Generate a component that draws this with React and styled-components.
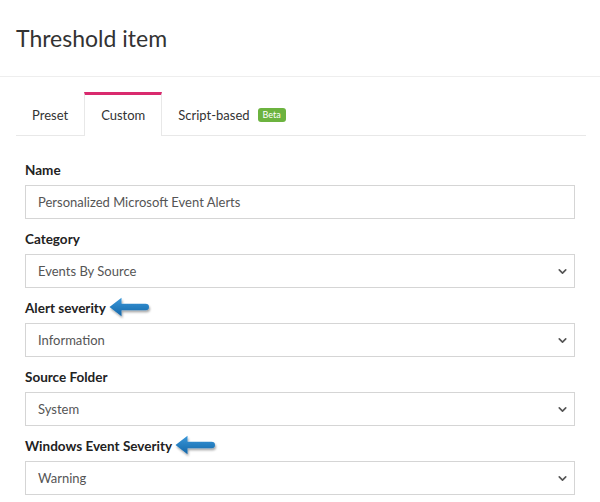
import React from 'react'
import styled, { createGlobalStyle } from 'styled-components'
import { ChevronDown } from 'lucide-react'

const GlobalStyle = createGlobalStyle`
  body {
    margin: 0;
    background: #fff;
    font-family: Lato, "Noto Sans", "Liberation Sans", sans-serif;
    color: #333;
  }
`;

const Page = styled.div`
  width: 600px;
  height: 502px;
  overflow: hidden;
  background: #fff;
`;

const Header = styled.div`
  height: 77px;
  display: flex;
  align-items: center;
  padding: 0 16px;
  border-bottom: 1px solid #eeeeee;
  box-sizing: border-box;
`;

const Title = styled.h1`
  margin: 0;
  font-size: 23px;
  font-weight: 400;
  color: #333;
`;

const Tabs = styled.div`
  display: flex;
  margin: 15px 14px 0 16px;
  border-bottom: 1px solid #e8e8e8;
`;

const Tab = styled.div`
  height: 43px;
  box-sizing: border-box;
  display: flex;
  align-items: center;
  gap: 8px;
  padding: 0 ${p => p.$pad || 15}px;
  font-size: 13px;
  color: #333;
  border-top: 3px solid ${p => (p.$active ? '#d92a6e' : 'transparent')};
  border-left: 1px solid ${p => (p.$active ? '#e8e8e8' : 'transparent')};
  border-right: 1px solid ${p => (p.$active ? '#e8e8e8' : 'transparent')};
  ${p => p.$active && 'background: #fff; margin-bottom: -1px; height: 44px; padding-bottom: 1px;'}
`;

const Badge = styled.span`
  background: #6cb33f;
  color: #fff;
  font-size: 9px;
  line-height: 14px;
  padding: 0 5px;
  border-radius: 3px;
`;

const Form = styled.div`
  padding: 25px 25px 0 25px;
`;

const Field = styled.div`
  margin-bottom: 11px;
`;

const Label = styled.div`
  display: flex;
  align-items: center;
  height: 18px;
  margin-bottom: 6px;
  font-size: 13.5px;
  font-weight: 700;
  color: #222;
`;

const Control = styled.div`
  position: relative;
  height: 34px;
  box-sizing: border-box;
  border: 1px solid #d5d5d5;
  display: flex;
  align-items: center;
  padding: 0 12px;
  font-size: 13px;
  color: #555;
`;

const Chevron = styled.span`
  position: absolute;
  right: 5px;
  top: 10px;
  display: flex;
  color: #555;
`;

const Arrow = () => (
  <svg width="46" height="26" viewBox="0 0 46 26" style={{ marginLeft: 2, marginTop: 3 }}>
    <defs>
      <linearGradient id="ag" x1="0" y1="0" x2="0" y2="1">
        <stop offset="0" stopColor="#3a98da" />
        <stop offset="1" stopColor="#1466a8" />
      </linearGradient>
      <filter id="as" x="-20%" y="-30%" width="150%" height="180%">
        <feDropShadow dx="1" dy="2" stdDeviation="1.3" floodColor="#000" floodOpacity="0.35" />
      </filter>
    </defs>
    <path
      d="M1.5 10 L13.5 0.8 L13.5 6.8 L37.5 6.8 Q41 6.8 41 10 Q41 13.2 37.5 13.2 L13.5 13.2 L13.5 19.2 Z"
      fill="url(#ag)"
      filter="url(#as)"
    />
  </svg>
);

const fields = [
  { label: 'Name', value: 'Personalized Microsoft Event Alerts' },
  { label: 'Category', value: 'Events By Source', select: true },
  { label: 'Alert severity', value: 'Information', select: true, arrow: true },
  { label: 'Source Folder', value: 'System', select: true },
  { label: 'Windows Event Severity', value: 'Warning', select: true, arrow: true },
];

export default function App() {
  return (
    <Page>
      <GlobalStyle />
      <Header>
        <Title>Threshold item</Title>
      </Header>
      <Tabs>
        <Tab>Preset</Tab>
        <Tab $active $pad={16}>Custom</Tab>
        <Tab>
          Script-based <Badge>Beta</Badge>
        </Tab>
      </Tabs>
      <Form>
        {fields.map(f => (
          <Field key={f.label}>
            <Label>
              {f.label}
              {f.arrow && <Arrow />}
            </Label>
            <Control>
              {f.value}
              {f.select && (
                <Chevron>
                  <ChevronDown size={13} strokeWidth={3} />
                </Chevron>
              )}
            </Control>
          </Field>
        ))}
      </Form>
    </Page>
  )
}
